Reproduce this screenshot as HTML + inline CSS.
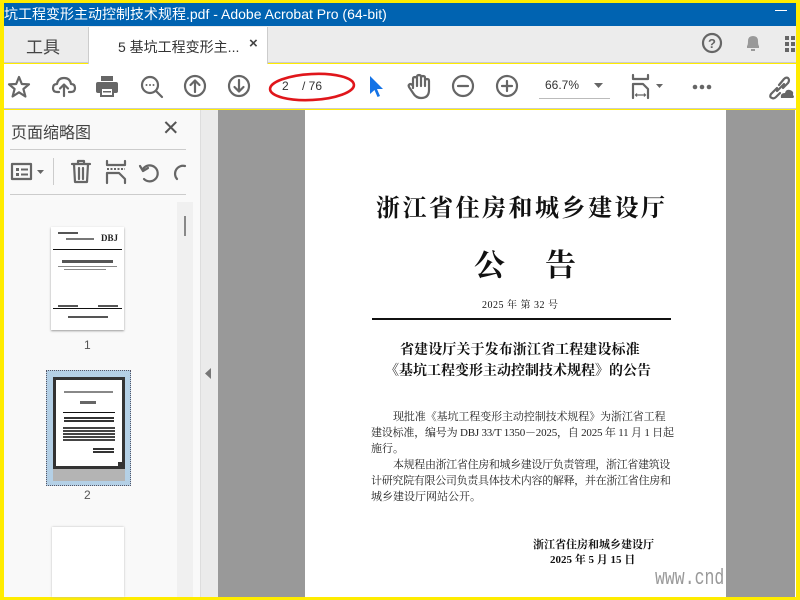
<!DOCTYPE html>
<html><head><meta charset="utf-8"><style>
*{margin:0;padding:0;box-sizing:border-box}
body{width:800px;height:600px;overflow:hidden;background:#ffec00;position:relative;font-family:"Liberation Sans","Noto Sans CJK SC",sans-serif}
.a{position:absolute}
.serif{font-family:"Liberation Serif","Noto Serif CJK SC",serif;color:#111}
svg{position:absolute;overflow:visible}
.ic{stroke:#666;stroke-width:2.2;fill:none;stroke-linecap:round;stroke-linejoin:round}
.bl div{white-space:nowrap;height:16px}
</style></head><body>
<div class="a" style="left:4px;top:3px;width:792px;height:23px;background:#0063b1"></div>
<div class="a" style="left:4px;top:4px;color:#fff;font-size:14px;white-space:nowrap">坑工程变形主动控制技术规程.pdf - Adobe Acrobat Pro (64-bit)</div>
<div class="a" style="left:775px;top:10px;width:12px;height:1px;background:#fff"></div>
<div class="a" style="left:4px;top:26px;width:792px;height:37px;background:#ececec;border-bottom:1px solid #ccc"></div>
<div class="a" style="left:88px;top:27px;width:180px;height:37px;background:#fff;border-left:1px solid #ccc;border-right:1px solid #ccc"></div>
<div class="a" style="left:26px;top:33px;font-size:17px;color:#444">工具</div>
<div class="a" style="left:118px;top:37px;font-size:14px;color:#333;white-space:nowrap">5 基坑工程变形主...</div>
<div class="a" style="left:249px;top:35px;font-size:15px;color:#444;font-weight:bold">×</div>
<svg style="left:702px;top:33px" width="20" height="20"><circle cx="10" cy="10" r="9" class="ic"/><text x="10" y="15" text-anchor="middle" font-size="13" font-weight="bold" fill="#666" font-family="Liberation Sans">?</text></svg>
<svg style="left:744px;top:33px" width="18" height="20"><path d="M3 15 L3 13 Q4 12 4 8 Q4 3 9 3 Q14 3 14 8 Q14 12 15 13 L15 15 Z" fill="#999"/><rect x="7" y="16" width="4" height="2" fill="#999"/></svg>
<svg style="left:785px;top:36px" width="12" height="16"><rect x="0" y="0" width="4" height="4" fill="#666"/><rect x="6" y="0" width="4" height="4" fill="#666"/><rect x="0" y="6" width="4" height="4" fill="#666"/><rect x="6" y="6" width="4" height="4" fill="#666"/><rect x="0" y="12" width="4" height="4" fill="#666"/><rect x="6" y="12" width="4" height="4" fill="#666"/></svg>
<div class="a" style="left:4px;top:64px;width:792px;height:45px;background:#fff;border-bottom:1px solid #ccc"></div>
<svg style="left:7px;top:75px" width="24" height="24"><path d="M12 2 L14.8 9 L22 9.3 L16.4 14 L18.4 21.5 L12 17.3 L5.6 21.5 L7.6 14 L2 9.3 L9.2 9 Z" class="ic"/></svg>
<svg style="left:52px;top:76px" width="24" height="22"><path d="M7 16 H5 Q1 16 1 12 Q1 8 5 8 Q6 2 12 2 Q18 2 19 8 Q23 8 23 12 Q23 16 19 16 H17" class="ic"/><path d="M12 20 V9 M8 12.5 L12 8.5 L16 12.5" class="ic"/></svg>
<svg style="left:95px;top:75px" width="24" height="22"><rect x="6" y="1" width="12" height="5" fill="#666"/><rect x="1" y="7" width="22" height="11" rx="2" fill="#666"/><rect x="6" y="13" width="12" height="8" fill="#fff" stroke="#666" stroke-width="2"/><rect x="8" y="16" width="8" height="1.5" fill="#666"/></svg>
<svg style="left:140px;top:75px" width="24" height="24"><circle cx="10" cy="10" r="8" class="ic"/><path d="M16 16 L22 22" class="ic"/><circle cx="6.5" cy="10" r="1" fill="#666"/><circle cx="10" cy="10" r="1" fill="#666"/><circle cx="13.5" cy="10" r="1" fill="#666"/></svg>
<svg style="left:184px;top:75px" width="22" height="22"><circle cx="11" cy="11" r="10" class="ic"/><path d="M11 17 V5.5 M6.5 10 L11 5.5 L15.5 10" class="ic"/></svg>
<svg style="left:228px;top:75px" width="22" height="22"><circle cx="11" cy="11" r="10" class="ic"/><path d="M11 5 V16.5 M6.5 12 L11 16.5 L15.5 12" class="ic"/></svg>
<div class="a" style="left:282px;top:79px;font-size:12px;color:#333">2</div>
<div class="a" style="left:302px;top:79px;font-size:12px;color:#333">/ 76</div>
<svg style="left:268px;top:70px" width="92" height="36"><ellipse cx="44" cy="17" rx="42" ry="13" fill="none" stroke="#e0161b" stroke-width="2.6" transform="rotate(-3 44 17)"/></svg>
<svg style="left:368px;top:75px" width="16" height="24"><path d="M2 1 L2 19 L6.5 15 L9.5 22 L12 21 L9 14 L15 14 Z" fill="#1473e6"/></svg>
<svg style="left:407px;top:74px" width="24" height="26"><path d="M6 14 V5 Q6 3 8 3 Q10 3 10 5 V12 V3 Q10 1 12 1 Q14 1 14 3 V12 V4 Q14 2 16 2 Q18 2 18 4 V12 V7 Q18 5 20 5 Q22 5 22 7 V16 Q22 24 14 24 Q9 24 6 19 L2 13 Q1 11 3 10 Q5 10 6 12" class="ic" stroke-width="1.8"/></svg>
<svg style="left:452px;top:75px" width="22" height="22"><circle cx="11" cy="11" r="10" class="ic"/><path d="M6 11 H16" class="ic"/></svg>
<svg style="left:496px;top:75px" width="22" height="22"><circle cx="11" cy="11" r="10" class="ic"/><path d="M6 11 H16 M11 6 V16" class="ic"/></svg>
<div class="a" style="left:545px;top:78px;font-size:12px;color:#333">66.7%</div>
<div class="a" style="left:539px;top:98px;width:71px;height:1px;background:#bbb"></div>
<svg style="left:594px;top:83px" width="10" height="6"><path d="M0 0 H9 L4.5 5 Z" fill="#666"/></svg>
<svg style="left:632px;top:74px" width="34" height="26"><path d="M1 1 V5 H16 V1" class="ic" stroke-width="2"/><path d="M1 24 V10 H11 L16 15 V24" class="ic" stroke-width="2"/><path d="M4 21 H13 M5 19.5 L3.5 21 L5 22.5 M12 19.5 L13.5 21 L12 22.5" stroke="#666" stroke-width="1.2" fill="none"/><path d="M24 10 H31 L27.5 14 Z" fill="#666"/></svg>
<svg style="left:692px;top:84px" width="20" height="6"><circle cx="3" cy="3" r="2.3" fill="#666"/><circle cx="10" cy="3" r="2.3" fill="#666"/><circle cx="17" cy="3" r="2.3" fill="#666"/></svg>
<svg style="left:767px;top:74px" width="28" height="26"><path d="M10 14 L4 20 Q2 23 5 24 Q7 25 9 23 L13 19 M12 11 L17 5 Q19 3 21 4 Q23 6 21 9 L16 14 M10 17 L17 10" class="ic" stroke-width="2"/><path d="M14 24 Q13 19 18 19 Q19 15 23 16 Q27 17 26 21 Q28 23 26 24 Z" fill="#666"/></svg>
<div class="a" style="left:4px;top:110px;width:196px;height:487px;background:#f9f9f9"></div>
<div class="a" style="left:11px;top:119px;font-size:16px;color:#444">页面缩略图</div>
<div class="a" style="left:162px;top:116px;font-size:21px;color:#555">✕</div>
<div class="a" style="left:10px;top:149px;width:176px;height:1px;background:#ccc"></div>
<div class="a" style="left:10px;top:194px;width:176px;height:1px;background:#ccc"></div>
<div class="a" style="left:53px;top:158px;width:1px;height:27px;background:#ccc"></div>
<svg style="left:11px;top:163px" width="34" height="18"><rect x="1" y="1" width="19" height="15" class="ic" stroke-width="2"/><rect x="5" y="5" width="3" height="3" fill="#666"/><rect x="5" y="10" width="3" height="3" fill="#666"/><path d="M10 6.5 H17 M10 11.5 H17" stroke="#666" stroke-width="2"/><path d="M26 7 H33 L29.5 11 Z" fill="#666"/></svg>
<svg style="left:71px;top:160px" width="20" height="24"><path d="M1 4 H19 M7 4 V1 H13 V4 M3 4 L4 22 H16 L17 4 M8 8 V19 M12 8 V19" class="ic" stroke-width="2"/></svg>
<svg style="left:106px;top:161px" width="20" height="22"><path d="M1 0 V4 H19 V0" class="ic" stroke-width="2"/><path d="M1 8 H19" stroke="#666" stroke-width="2" stroke-dasharray="2 1.5"/><path d="M1 22 V12 H13 L19 18 V22" class="ic" stroke-width="2"/></svg>
<svg style="left:138px;top:161px" width="24" height="24"><path d="M6 18 A8 8 0 1 0 5 8" class="ic" stroke-width="2.4"/><path d="M2 5 L5 10 L10 7" class="ic" stroke-width="2.4"/></svg>
<svg style="left:172px;top:161px" width="14" height="24"><path d="M13 5 A8 8 0 0 0 5 18" class="ic" stroke-width="2.4"/></svg>
<div class="a" style="left:177px;top:202px;width:16px;height:395px;background:#f0f0f0"></div>
<div class="a" style="left:184px;top:216px;width:2px;height:20px;background:#888"></div>
<div class="a" style="left:51px;top:227px;width:73px;height:103px;background:#fff;box-shadow:0 1px 2px #999"></div>
<div class="a" style="left:58px;top:232px;width:20px;height:2px;background:#555"></div>
<div class="a" style="left:66px;top:238px;width:28px;height:2px;background:#777"></div>
<div class="a" style="left:101px;top:233px;font-size:9px;font-weight:bold;font-family:'Liberation Serif',serif;color:#222">DBJ</div>
<div class="a" style="left:53px;top:249px;width:69px;height:1px;background:#111"></div>
<div class="a" style="left:62px;top:260px;width:51px;height:3px;background:#555"></div>
<div class="a" style="left:58px;top:266px;width:59px;height:1px;background:#888"></div>
<div class="a" style="left:64px;top:269px;width:42px;height:1px;background:#888"></div>
<div class="a" style="left:58px;top:305px;width:20px;height:2px;background:#555"></div>
<div class="a" style="left:98px;top:305px;width:20px;height:2px;background:#555"></div>
<div class="a" style="left:53px;top:308px;width:69px;height:1px;background:#111"></div>
<div class="a" style="left:68px;top:316px;width:40px;height:2px;background:#555"></div>
<div class="a" style="left:84px;top:338px;font-size:12px;color:#555">1</div>
<div class="a" style="left:46px;top:370px;width:85px;height:116px;background:#b4d0e6;border:1px dotted #556"></div>
<div class="a" style="left:53px;top:377px;width:72px;height:92px;background:#fff;border:3px solid #333"></div>
<div class="a" style="left:53px;top:469px;width:72px;height:12px;background:#b4b4b4"></div>
<div class="a" style="left:118px;top:462px;width:7px;height:7px;background:#333"></div>
<div class="a" style="left:64px;top:391px;width:49px;height:2px;background:#888"></div>
<div class="a" style="left:80px;top:401px;width:16px;height:3px;background:#666"></div>
<div class="a" style="left:63px;top:412px;width:52px;height:1px;background:#111"></div>
<div class="a" style="left:64px;top:417px;width:50px;height:6px;background:repeating-linear-gradient(#333 0 2px,#fff 2px 3px)"></div>
<div class="a" style="left:63px;top:427px;width:52px;height:15px;background:repeating-linear-gradient(#444 0 2px,#fff 2px 3px)"></div>
<div class="a" style="left:93px;top:448px;width:21px;height:5px;background:repeating-linear-gradient(#333 0 2px,#fff 2px 3px)"></div>
<div class="a" style="left:84px;top:488px;font-size:12px;color:#555">2</div>
<div class="a" style="left:52px;top:527px;width:72px;height:70px;background:#fff;box-shadow:0 0 2px #bbb"></div>
<div class="a" style="left:200px;top:110px;width:18px;height:487px;background:#ebebeb;border-left:1px solid #ddd"></div>
<svg style="left:205px;top:368px" width="8" height="12"><path d="M6 0 V11 L0 5.5 Z" fill="#777"/></svg>
<div class="a" style="left:218px;top:110px;width:577px;height:487px;background:#999"></div>
<div class="a" style="left:795px;top:110px;width:1px;height:487px;background:#fff"></div>
<div class="a" style="left:305px;top:110px;width:421px;height:487px;background:#fff"></div>
<div class="a serif" style="left:376px;top:188px;font-size:24px;letter-spacing:2.5px;white-space:nowrap;font-weight:bold">浙江省住房和城乡建设厅</div>
<div class="a serif" style="left:474px;top:240px;font-size:31px;white-space:nowrap;font-weight:bold">公<span style="display:inline-block;width:40px"></span>告</div>
<div class="a serif" style="left:482px;top:296px;font-size:10px;letter-spacing:0.5px;white-space:nowrap">2025 年 第 32 号</div>
<div class="a" style="left:372px;top:318px;width:299px;height:2px;background:#111"></div>
<div class="a serif" style="left:400px;top:339px;font-size:14px;letter-spacing:0.1px;font-weight:bold;white-space:nowrap">省建设厅关于发布浙江省工程建设标准</div>
<div class="a serif" style="left:385px;top:360px;font-size:14px;font-weight:bold;white-space:nowrap">《基坑工程变形主动控制技术规程》的公告</div>
<div class="a serif bl" style="left:371px;top:409px;width:302px;font-size:11px;line-height:16px;color:#222">
<div style="padding-left:22px;letter-spacing:-0.1px">现批准《基坑工程变形主动控制技术规程》为浙江省工程</div>
<div style="letter-spacing:-0.2px">建设标准，编号为 DBJ 33/T 1350－2025，自 2025 年 11 月 1 日起</div>
<div>施行。</div>
<div style="padding-left:22px;letter-spacing:-0.35px">本规程由浙江省住房和城乡建设厅负责管理，浙江省建筑设</div>
<div style="letter-spacing:-0.3px">计研究院有限公司负责具体技术内容的解释，并在浙江省住房和</div>
<div>城乡建设厅网站公开。</div>
</div>
<div class="a serif" style="left:533px;top:536px;font-size:11px;font-weight:bold;white-space:nowrap">浙江省住房和城乡建设厅</div>
<div class="a serif" style="left:550px;top:551px;font-size:11px;font-weight:bold;white-space:nowrap">2025 年 5 月 15 日</div>
<div class="a" style="left:655px;top:566px;width:71px;height:30px;overflow:hidden"><div style="font-size:22px;color:#999;font-family:'Liberation Mono',monospace;white-space:nowrap;transform:scaleX(0.75);transform-origin:left">www.cnd</div></div>
<div class="a" style="left:0;top:0;width:4px;height:600px;background:#ffec00"></div>
</body></html>
